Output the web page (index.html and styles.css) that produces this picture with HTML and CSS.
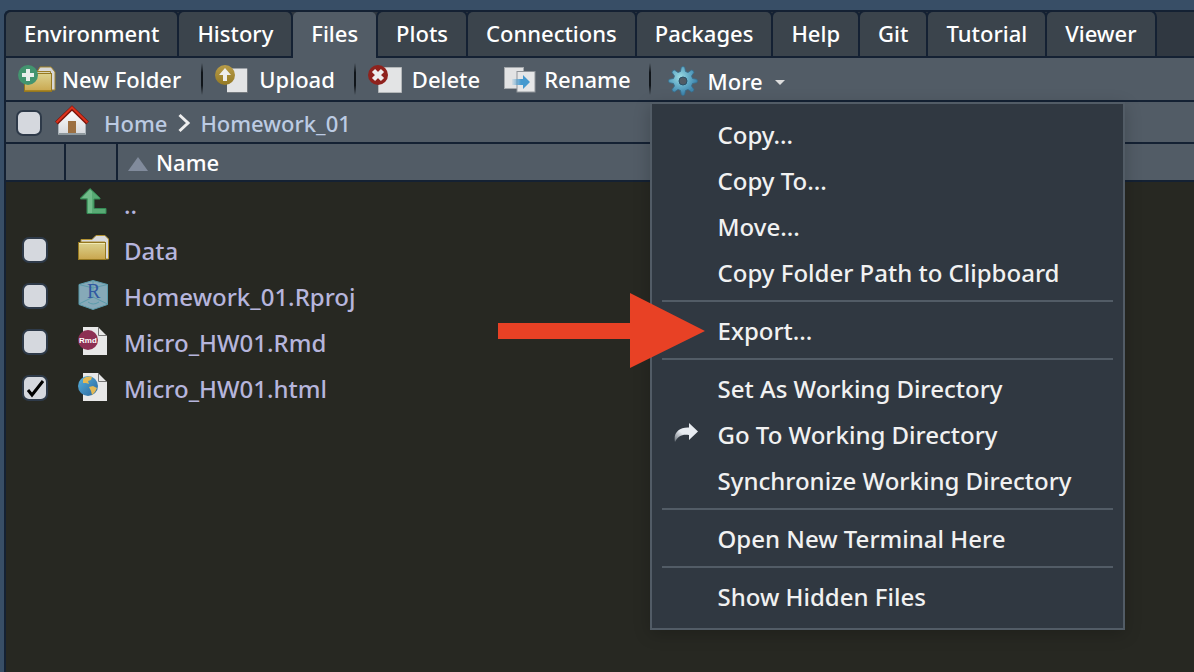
FILE: index.html
```html
<!DOCTYPE html>
<html lang="en">
<head>
<meta charset="utf-8">
<title>Files</title>
<link rel="stylesheet" href="styles.css">
</head>
<body>
<svg class="defs" aria-hidden="true">
  <defs>
    <linearGradient id="gold" x1="0" y1="0" x2="0" y2="1"><stop offset="0" stop-color="#dcd28e"/><stop offset="1" stop-color="#c9a64e"/></linearGradient>
    <linearGradient id="ocean" x1="0" y1="0" x2="1" y2="1"><stop offset="0" stop-color="#5ab4de"/><stop offset="1" stop-color="#28639b"/></linearGradient>
    <linearGradient id="olive" x1="0" y1="0" x2="0" y2="1"><stop offset="0" stop-color="#b89c48"/><stop offset="1" stop-color="#957a25"/></linearGradient>
    <linearGradient id="slide" x1="0" y1="0" x2="1" y2="0"><stop offset="0" stop-color="#4b9dd0" stop-opacity=".1"/><stop offset=".5" stop-color="#4499cf"/></linearGradient>
    <linearGradient id="wall" x1="0" y1="0" x2="0" y2="1"><stop offset="0" stop-color="#fff"/><stop offset="1" stop-color="#d5d8dc"/></linearGradient>
    <linearGradient id="fade" x1="0" y1="1" x2="1" y2="0"><stop offset="0" stop-color="#dfe4e9" stop-opacity=".3"/><stop offset=".4" stop-color="#e8ecf1"/></linearGradient>
    <radialGradient id="steel" gradientUnits="userSpaceOnUse" cx="12" cy="11" r="17"><stop offset="0" stop-color="#9bdae2"/><stop offset=".5" stop-color="#68b0ca"/><stop offset="1" stop-color="#3f86ae"/></radialGradient>
  </defs>
</svg>
<main class="pane">
  <nav class="tabs" role="tablist">
    <button class="tab" role="tab">Environment</button>
    <button class="tab" role="tab">History</button>
    <button class="tab tab-active" role="tab" aria-selected="true">Files</button>
    <button class="tab" role="tab">Plots</button>
    <button class="tab" role="tab">Connections</button>
    <button class="tab" role="tab">Packages</button>
    <button class="tab" role="tab">Help</button>
    <button class="tab" role="tab">Git</button>
    <button class="tab" role="tab">Tutorial</button>
    <button class="tab" role="tab">Viewer</button>
  </nav>

  <div class="toolbar" role="toolbar">
    <button class="tool tool-new">
      <svg width="38" height="30" viewBox="0 0 38 30" aria-hidden="true">
        <path d="M19 8 22 3h11l4 5v18h-5V9z" fill="#d8d8d8" stroke="#a2852c"/>
        <path d="M6.500 10.500v-3h26v3" fill="#d8d3b0" stroke="#9b7d25"/>
        <rect x="6.500" y="9.500" width="27" height="18" fill="url(#gold)" stroke="#967820"/>
        <path d="M7 26.500h26" stroke="#a98523"/>
        <circle cx="10" cy="11" r="10" fill="#43946f"/>
        <path d="M10 5v12M4 11h12" stroke="#e9eeeb" stroke-width="4"/>
      </svg>
      New Folder
    </button>
    <span class="divider"></span>
    <button class="tool tool-upload">
      <svg width="34" height="30" viewBox="0 0 34 30" aria-hidden="true">
        <path d="M13 4.500h19v24H12V12z" fill="#e3e4e5"/>
        <path d="M12 28.500h20.500v-24" fill="none" stroke="#767b80"/>
        <circle cx="10" cy="11" r="10" fill="url(#olive)"/>
        <path d="m10 4-6 7h4v6h4v-6h4z" fill="#eee"/>
      </svg>
      Upload
    </button>
    <span class="divider"></span>
    <button class="tool tool-delete">
      <svg width="34" height="30" viewBox="0 0 34 30" aria-hidden="true">
        <path d="M12 3.500h21.500v25H10.500V12z" fill="#e3e4e5" stroke="#b4b7b9"/>
        <circle cx="10" cy="11" r="10" fill="#8f221d"/>
        <path d="m5.500 6.500 9 9m0-9-9 9" stroke="#eee" stroke-width="4.500"/>
      </svg>
      Delete
    </button>
    <button class="tool tool-rename">
      <svg width="32" height="30" viewBox="0 0 32 30" aria-hidden="true">
        <rect x=".5" y="3.500" width="19" height="21" fill="#e2e3e4" stroke="#a4a8ac"/>
        <rect x="13" y="7.500" width="18" height="20.500" fill="#e5e6e7" stroke="#8f9499"/>
        <path d="M8 15h11v-4l7 7-7 7v-4H8z" fill="url(#slide)"/>
      </svg>
      Rename
    </button>
    <span class="divider"></span>
    <div class="more">
      <button class="tool tool-more" aria-haspopup="menu" aria-expanded="true">
        <svg width="30" height="30" viewBox="0 0 30 30" aria-hidden="true">
          <path id="cog" d="M12.500 5.500 13.300 1.200Q15-.2 16.700 1.200L17.500 5.500 20 6.500 23.600 4Q25.800 4.200 26 6.400L23.500 10 24.500 12.500 28.800 13.300Q30.200 15 28.800 16.700L24.500 17.500 23.500 20 26 23.600Q25.800 25.800 23.600 26L20 23.500 17.500 24.500 16.700 28.800Q15 30.200 13.300 28.800L12.500 24.500 10 23.500 6.400 26Q4.200 25.800 4 23.600L6.500 20 5.500 17.500 1.200 16.700Q-.2 15 1.200 13.300L5.500 12.500 6.500 10 4 6.400Q4.200 4.200 6.400 4L10 6.500z" fill="url(#steel)" stroke="#376d8b" stroke-width=".8"/>
          <circle cx="15" cy="15" r="4" fill="#505b65" stroke="#2a5068"/>
        </svg>
        More
        <svg class="caret" width="10" height="5" viewBox="0 0 10 5" aria-hidden="true"><path d="M0 0h10L5 5z" fill="#ddd"/></svg>
      </button>
      <div class="menu" role="menu">
        <button class="item" role="menuitem">Copy...</button>
        <button class="item" role="menuitem">Copy To...</button>
        <button class="item" role="menuitem">Move...</button>
        <button class="item" role="menuitem">Copy Folder Path to Clipboard</button>
        <hr class="rule">
        <button class="item" role="menuitem">Export...</button>
        <hr class="rule">
        <button class="item" role="menuitem">Set As Working Directory</button>
        <button class="item item-icon" role="menuitem">
          <svg width="24" height="24" viewBox="0 0 24 24" aria-hidden="true"><path d="M15 1 24 9.500 15 18v-5C8 12 4 14 1 20-1 11 5 5 15 5.500z" fill="url(#fade)"/></svg>
          Go To Working Directory
        </button>
        <button class="item" role="menuitem">Synchronize Working Directory</button>
        <hr class="rule">
        <button class="item" role="menuitem">Open New Terminal Here</button>
        <hr class="rule">
        <button class="item" role="menuitem">Show Hidden Files</button>
      </div>
    </div>
  </div>

  <div class="path">
    <input class="check" type="checkbox" aria-label="Select all files">
    <svg class="home" width="34" height="32" viewBox="0 0 34 32" aria-hidden="true">
      <path d="M3 17 17 3.500 31 17v13H3z" fill="url(#wall)"/>
      <path d="M3 29h28" stroke="#8e989d" stroke-width="2"/>
      <path d="M3.500 18v11m27-11v11" stroke="#aab2b8"/>
      <rect x="13" y="16" width="8" height="12" fill="#9c7042"/>
      <path d="M1.500 18 17 3l15.500 15" fill="none" stroke="#7b160c" stroke-width="4"/>
      <path d="M1.500 17.500 17 2.500l15.500 15" fill="none" stroke="#dc321d" stroke-width="2"/>
    </svg>
    <a class="crumb" href="#home">Home</a>
    <svg class="chevron" width="13" height="20" viewBox="0 0 13 20" aria-hidden="true"><path d="m1.500 2 8.500 8-8.500 8" fill="none" stroke="#eee" stroke-width="3"/></svg>
    <a class="crumb" href="#homework">Homework_01</a>
  </div>

  <table class="files">
    <colgroup><col class="col-check"><col class="col-icon"><col></colgroup>
    <thead>
      <tr>
        <th></th>
        <th></th>
        <th class="name-head"><svg width="20" height="14" viewBox="0 0 20 14" aria-hidden="true"><path d="M0 14 10 0l10 14z" fill="#818b9c"/></svg>Name</th>
      </tr>
    </thead>
    <tbody>
      <tr>
        <td></td>
        <td><svg width="32" height="30" viewBox="0 0 32 30" aria-hidden="true"><path d="M12 .5 2.500 10v1H9v14.500h19v-5H16V11h6v-1z" fill="#58aa74" stroke="#348b55"/><path d="M12 1.500 4 10h6v15h4V3.500z" fill="#7cc394" opacity=".7"/></svg></td>
        <td><a class="file" href="#up">..</a></td>
      </tr>
      <tr>
        <td><input class="check" type="checkbox" aria-label="Data"></td>
        <td><svg width="32" height="30" viewBox="0 0 32 30" aria-hidden="true"><path d="M3 8V5.500h11L18 1.500h9L30.500 5v20H27V8z" fill="#d9dadd" stroke="#b39334"/><rect x=".5" y="8.500" width="27" height="17" fill="url(#gold)" stroke="#967820"/><path d="M1 9.500h26" stroke="#f0eab4"/></svg></td>
        <td><a class="file" href="#data">Data</a></td>
      </tr>
      <tr>
        <td><input class="check" type="checkbox" aria-label="Homework_01.Rproj"></td>
        <td><svg width="32" height="30" viewBox="0 0 32 30" aria-hidden="true"><path d="m15 .5 14.500 4v20L15 29.500l-14-5v-20z" fill="#86a9b8"/><path d="m15 .5 14.500 4v20L15 29.500l-14-5v-20zM1 24l14-7 14.500 7M15 17V1M1 4.500 15 8l14.500-3.500M10 22q5 4 11 0" fill="none" stroke="#5b9bab"/><text class="glyph-r" x="9" y="18">R</text></svg></td>
        <td><a class="file" href="#rproj">Homework_01.Rproj</a></td>
      </tr>
      <tr>
        <td><input class="check" type="checkbox" aria-label="Micro_HW01.Rmd"></td>
        <td><svg width="32" height="30" viewBox="0 0 32 30" aria-hidden="true"><path d="M5 1h15l9 9v19H5z" fill="#e8e8e8"/><path d="M20.500 1v8.500H29" fill="none" stroke="#777"/><circle cx="10" cy="14" r="10" fill="#8d3053"/><text class="glyph-rmd" x="1" y="17">Rmd</text></svg></td>
        <td><a class="file" href="#rmd">Micro_HW01.Rmd</a></td>
      </tr>
      <tr>
        <td><input class="check" type="checkbox" aria-label="Micro_HW01.html" checked></td>
        <td><svg width="32" height="30" viewBox="0 0 32 30" aria-hidden="true"><path d="M5 1h15l9 9v19H5z" fill="#e8e8e8"/><path d="M20.500 1v8.500H29" fill="none" stroke="#777"/><circle cx="10" cy="14" r="10" fill="url(#ocean)"/><path d="M5 7c3-3 7-3 9-2l-1 3-3 1 1 3-3-1-3 0zM11 15l4-1 4 2-2 4-3 3-1-4z" fill="#e3b955"/></svg></td>
        <td><a class="file" href="#html">Micro_HW01.html</a></td>
      </tr>
    </tbody>
  </table>
</main>
<svg class="pointer" width="208" height="76" viewBox="0 0 208 76" aria-hidden="true"><path d="M0 30h132V0l75 38-75 37V46H0z" fill="#e84125"/></svg>
</body>
</html>
```
FILE: styles.css
```css
* {
  box-sizing: border-box;
}

html,
body {
  height: 100%;
}

body {
  margin: 0;
  padding: 10px 0 0 4px;
  background: #384e66;
  font-family: "Noto Sans", "Open Sans", sans-serif;
  font-size: 22px;
  font-weight: 500;
  color: #fff;
  overflow: hidden;
}

.defs {
  position: absolute;
  width: 0;
  height: 0;
}

button {
  margin: 0;
  border: 0;
  background: none;
  color: inherit;
  font: inherit;
  white-space: nowrap;
}

.pane {
  min-height: 100%;
  border: solid #142133;
  border-width: 2px 0 0 2px;
  border-top-left-radius: 6px;
  background: #272822;
}

.tabs {
  display: flex;
  gap: 2px;
  height: 46px;
  background: linear-gradient(#142133, #142133) bottom / 100% 2px no-repeat #303841;
}

.tab {
  height: 44px;
  padding: 0 18px 2px;
  border-radius: 5px 5px 0 0;
  background: #3b444c;
  box-shadow: 0 0 0 2px #142133;
}

.tab-active {
  position: relative;
  height: 46px;
  padding-bottom: 4px;
  background: #525c66;
  box-shadow: none;
}

.toolbar {
  display: flex;
  align-items: center;
  height: 44px;
  border-bottom: 2px solid #142133;
  background: #525c66;
}

.tool {
  display: flex;
  align-items: center;
  gap: 10px;
  height: 42px;
  padding: 0 12px;
}

.tool-new {
  gap: 6px;
  padding-right: 20px;
}

.tool-upload {
  padding: 0 19px 0 11px;
}

.tool-delete {
  padding-left: 11px;
}

.tool-rename {
  gap: 8px;
  padding-right: 18px;
}

.tool-more {
  padding: 4px 16px 0;
}

.caret {
  margin: 2px 0 0 2px;
}

.divider {
  width: 3px;
  height: 32px;
  background: linear-gradient(transparent, #10151a 30%, #10151a 70%, transparent) left / 2px 100% no-repeat;
}

.more {
  position: relative;
}

.menu {
  position: absolute;
  z-index: 1;
  top: 44px;
  left: -2px;
  width: 475px;
  padding: 8px 0;
  border: 2px solid #525c66;
  background: #303841;
  box-shadow: 0 4px 16px rgba(0, 0, 0, 0.2);
  color: #f1f1f1;
  font-size: 24px;
}

.item {
  display: block;
  width: 100%;
  height: 46px;
  padding: 0 20px 2px 66px;
  text-align: left;
}

.item-icon {
  display: flex;
  align-items: center;
  gap: 20px;
  padding-left: 22px;
}

.rule {
  height: 2px;
  margin: 4px 10px 6px;
  border: 0;
  background: #525c66;
}

.path {
  display: flex;
  align-items: center;
  height: 42px;
  padding: 2px 0 0 10px;
  border-bottom: 2px solid #142133;
  background: #525c66;
}

.check {
  display: block;
  width: 26px;
  height: 26px;
  margin: 0;
  appearance: none;
  border: 2px solid #2e3a49;
  border-radius: 7px;
  background: #d5d8de;
}

.check:checked {
  background: url('data:image/svg+xml,<svg xmlns="http://www.w3.org/2000/svg" viewBox="0 0 22 22"><path d="M4 13l4 5L19 4" fill="none" stroke="black" stroke-width="3"/></svg>') center / 22px #d5d8de;
}

.home {
  margin: 0 15px 4px 13px;
}

.crumb {
  color: #bccbe3;
  text-decoration: none;
}

.chevron {
  margin: 0 9px 0 11px;
}

.files {
  width: 100%;
  table-layout: fixed;
  border-collapse: separate;
  border-spacing: 0;
}

.col-check {
  width: 60px;
}

.col-icon {
  width: 52px;
}

th {
  height: 38px;
  padding: 0;
  border: solid #142133;
  border-width: 0 2px 2px 0;
  background: #525c66;
  font-weight: 500;
  text-align: left;
  line-height: 36px;
}

.name-head {
  padding-left: 10px;
  border-right: 0;
}

.name-head svg {
  margin-right: 8px;
}

td {
  height: 46px;
  padding: 0 0 0 6px;
  line-height: 44px;
}

td:first-child {
  padding: 0 0 2px 16px;
}

td:nth-child(2) {
  padding: 0 0 4px 12px;
}

td svg {
  display: block;
}

.file {
  color: #b6b5dc;
  font-size: 24px;
  text-decoration: none;
}

.glyph-r {
  fill: #3159a0;
  font: 20px "Liberation Serif", serif;
}

.glyph-rmd {
  fill: #fff;
  font: bold 8px "Liberation Sans", sans-serif;
}

.pointer {
  position: absolute;
  z-index: 2;
  top: 293px;
  left: 498px;
}
```
